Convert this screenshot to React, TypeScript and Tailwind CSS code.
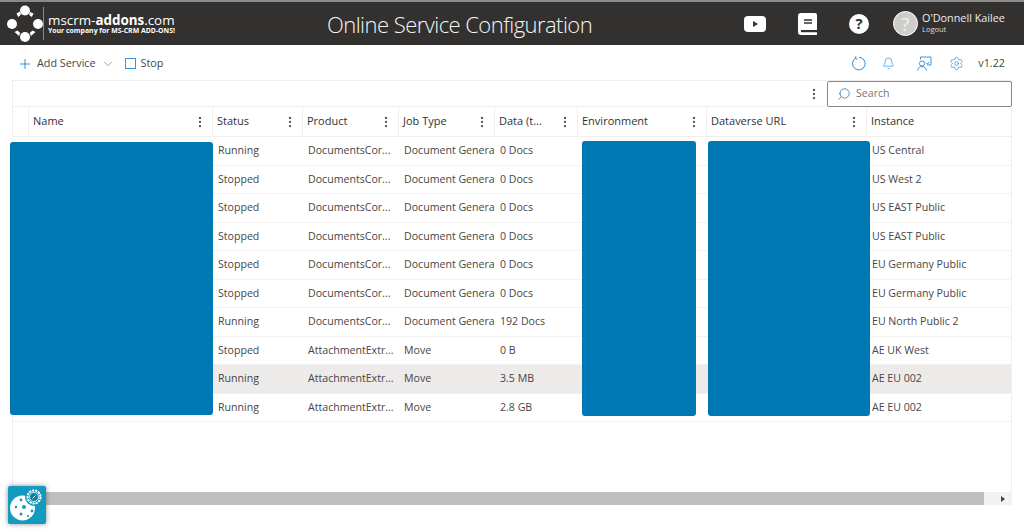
import React from "react";
import { Plus, ChevronDown, Bell, Settings, Search, EllipsisVertical } from "lucide-react";

const rows = [
  ["Running", "DocumentsCor...", "Document Genera", "0 Docs", "US Central"],
  ["Stopped", "DocumentsCor...", "Document Genera", "0 Docs", "US West 2"],
  ["Stopped", "DocumentsCor...", "Document Genera", "0 Docs", "US EAST Public"],
  ["Stopped", "DocumentsCor...", "Document Genera", "0 Docs", "US EAST Public"],
  ["Stopped", "DocumentsCor...", "Document Genera", "0 Docs", "EU Germany Public"],
  ["Stopped", "DocumentsCor...", "Document Genera", "0 Docs", "EU Germany Public"],
  ["Running", "DocumentsCor...", "Document Genera", "192 Docs", "EU North Public 2"],
  ["Stopped", "AttachmentExtr...", "Move", "0 B", "AE UK West"],
  ["Running", "AttachmentExtr...", "Move", "3.5 MB", "AE EU 002"],
  ["Running", "AttachmentExtr...", "Move", "2.8 GB", "AE EU 002"],
];

const cols = "grid grid-cols-[15px_184px_90px_96px_96px_83px_129px_160px_145px]";

function Head({ label, dots = true }: { label: string; dots?: boolean }) {
  return (
    <div className="flex items-center justify-between border-l border-[#f0efee] pl-[4px] pr-[5px] text-[#323130] font-medium text-[11px]">
      <span>{label}</span>
      {dots && <EllipsisVertical size={14} strokeWidth={2} className="text-[#555]" />}
    </div>
  );
}

function Redact({ className }: { className: string }) {
  return <div className={"absolute bg-[#0078b4] rounded-[3px] " + className} />;
}

export default function App() {
  return (
    <div className="relative w-[1024px] h-[532px] overflow-hidden bg-white font-['Open_Sans','Noto_Sans',sans-serif] text-[10.6px] text-[#484644]">
      <header className="h-[45px] bg-[#323130] border-t-2 border-[#8a8a8a] flex items-center text-white">
        <div className="w-[280px] pl-[5px] flex items-center">
          <svg width="40" height="40" viewBox="0 0 40 40" fill="white">
            <circle cx="20" cy="6.5" r="5" />
            <circle cx="7" cy="20" r="5" />
            <circle cx="33" cy="20" r="5" />
            <circle cx="20" cy="33" r="5" />
            <path d="M11.5 9.5l3.5-2 1 3-2.800 2.400z M25 8l3.500 1.500-1.700 3.600-2.800-2.400z M9.500 28l3-1.600 2.800 2.600-1.300 3z M30.500 28l-3-1.600-2.800 2.600 1.300 3z" />
          </svg>
          <div className="w-px h-[33px] bg-[#8a8a8a] ml-[-2px]" />
          <div className="ml-[4px] flex flex-col">
            <div className="text-[13.4px] leading-[14px]">
              mscrm-<b>addons</b>.com
            </div>
            <div className="text-[6.9px] leading-[8px] font-bold whitespace-nowrap">Your company for MS-CRM ADD-ONS!</div>
          </div>
        </div>
        <div className="ml-[47px] text-[22px] tracking-[-0.55px] font-light text-[#f5f5f5] leading-none whitespace-nowrap">Online Service Configuration</div>
        <div className="ml-auto flex items-center">
          <svg width="22" height="16" viewBox="0 0 22 16" className="mr-[32px]">
            <rect width="22" height="16" rx="4" fill="white" />
            <path d="M9 5l5 3-5 3z" fill="#323130" />
          </svg>
          <svg width="19" height="22" viewBox="0 0 19 22" className="mr-[32px]">
            <path d="M3 0h14a2 2 0 0 1 2 2v20H3a3 3 0 0 1-3-3V3a3 3 0 0 1 3-3z" fill="white" />
            <path d="M6 7h8M6 10h8" stroke="#323130" strokeWidth="1.4" />
            <rect x="3" y="17" width="16" height="2.2" fill="#323130" />
          </svg>
          <div className="w-[20px] h-[20px] rounded-full bg-white text-[#323130] flex items-center justify-center text-[15px] font-bold mr-[24px] leading-none">?</div>
          <div className="w-[25px] h-[25px] rounded-full bg-[#cfcdcb] border border-white flex items-center justify-center text-[#f2f2f2] text-[18px] font-normal leading-none mr-[4px]">?</div>
          <div className="w-[82px] mr-[20px] leading-none">
            <div className="text-[10.8px] text-[#eee] whitespace-nowrap">O'Donnell Kailee</div>
            <div className="text-[7.5px] mt-[2px] text-[#ddd]">Logout</div>
          </div>
        </div>
      </header>

      <div className="h-[35px] pt-[2px] flex items-center pl-[17px] pr-[19px] text-[10.8px]">
        <Plus size={16} strokeWidth={1.2} className="text-[#0078d4]" />
        <span className="ml-[4px]">Add Service</span>
        <ChevronDown size={14} strokeWidth={1} className="ml-[5px] text-[#666]" />
        <div className="ml-[10px] w-[11px] h-[11px] border border-[#3b93dc]" />
        <span className="ml-[5px]">Stop</span>
        <div className="ml-auto flex items-center text-[#2a8ad4]">
          <svg width="15" height="15" viewBox="0 0 15 15" fill="none" stroke="currentColor" strokeWidth="1">
            <path d="M4.300 2.400A6.300 6.300 0 1 0 8 1.300" />
            <path d="M5 0.300L4.300 2.400l2.200 0.900" />
          </svg>
          <Bell size={13} strokeWidth={1.2} className="ml-[16px]" />
          <svg width="15" height="15" viewBox="0 0 15 15" fill="none" stroke="currentColor" strokeWidth="0.9" className="ml-[22px]">
            <path d="M3.500 3.500V1h10.500v8H10" />
            <path d="M9 6.500l1.500 1.500L12 6" />
            <circle cx="5" cy="7.500" r="2.600" />
            <path d="M0.700 14.500c0-2.500 2-4 4.300-4s4.300 1.500 4.300 4" />
          </svg>
          <Settings size={15} strokeWidth={1.1} className="ml-[17px]" />
          <span className="ml-[14px] text-[#484644]">v1.22</span>
        </div>
      </div>

      <div className="mx-[12px] h-[425px] border border-[#f0efee] border-b-0 flex flex-col">
        <div className="h-[26px] flex items-center justify-end border-b border-[#f0efee]">
          <EllipsisVertical size={14} strokeWidth={2} className="text-[#555] mr-[6px]" />
          <div className="w-[185px] h-[26px] border border-[#8a8886] rounded-[2px] flex items-center pl-[9px] mr-[-1px] bg-white text-[#777]">
            <Search size={14} strokeWidth={1.3} className="text-[#0078d4] -scale-x-100" />
            <span className="ml-[5px]">Search</span>
          </div>
        </div>
        <div className={cols + " h-[30px] border-b border-[#f0efee]"}>
          <div />
          <Head label="Name" />
          <Head label="Status" />
          <Head label="Product" />
          <Head label="Job Type" />
          <Head label="Data (t..." />
          <Head label="Environment" />
          <Head label="Dataverse URL" />
          <Head label="Instance" dots={false} />
        </div>
        {rows.map((r, i) => (
          <div key={i} className={cols + " h-[28.5px] pt-[1px] items-center border-b border-[#f3f2f1] whitespace-nowrap " + (i === 8 ? "bg-[#edebe9]" : "")}>
            <div />
            <div />
            <div className="pl-[6px]">{r[0]}</div>
            <div className="pl-[6px]">{r[1]}</div>
            <div className="pl-[6px]">{r[2]}</div>
            <div className="pl-[6px]">{r[3]}</div>
            <div />
            <div />
            <div className="pl-[6px]">{r[4]}</div>
          </div>
        ))}
        <div className="mt-auto h-[13px] bg-[#f3f2f1] flex">
          <div className="w-[971px] bg-[#bfbfbf]" />
          <div className="ml-auto w-[16px] flex items-center justify-center">
            <div className="w-0 h-0 border-y-[3px] border-y-transparent border-l-[4px] border-l-[#444]" />
          </div>
        </div>
      </div>

      <Redact className="left-[10px] top-[142px] w-[203px] h-[273px]" />
      <Redact className="left-[582px] top-[141px] w-[114px] h-[275px]" />
      <Redact className="left-[708px] top-[141px] w-[162px] h-[275px]" />

      <div className="absolute left-[8px] top-[486px] w-[38px] h-[38px] bg-[#129abf] rounded-[2px] shadow-[0_0_5px_rgba(0,0,0,0.45)]">
        <svg width="38" height="38" viewBox="0 0 38 38">
          <circle cx="14.500" cy="22" r="12.500" fill="white" />
          <circle cx="16" cy="21" r="2" fill="#129abf" />
          <circle cx="8" cy="21" r="1.200" fill="#129abf" />
          <circle cx="13" cy="14" r="1.400" fill="#129abf" />
          <circle cx="13" cy="28" r="1.500" fill="#129abf" />
          <circle cx="20" cy="30" r="1.100" fill="#129abf" />
          <circle cx="24" cy="25" r="1.400" fill="#129abf" />
          <circle cx="26" cy="11" r="9" fill="#129abf" />
          <circle cx="26" cy="11" r="6.500" fill="#129abf" stroke="white" strokeWidth="2" strokeDasharray="2.200 0.900" />
          <circle cx="26" cy="11" r="4.500" fill="#0b7fa1" stroke="white" strokeWidth="0.800" />
          <path d="M24.500 12.500l3-3" stroke="white" strokeWidth="1" />
        </svg>
      </div>
    </div>
  );
}
